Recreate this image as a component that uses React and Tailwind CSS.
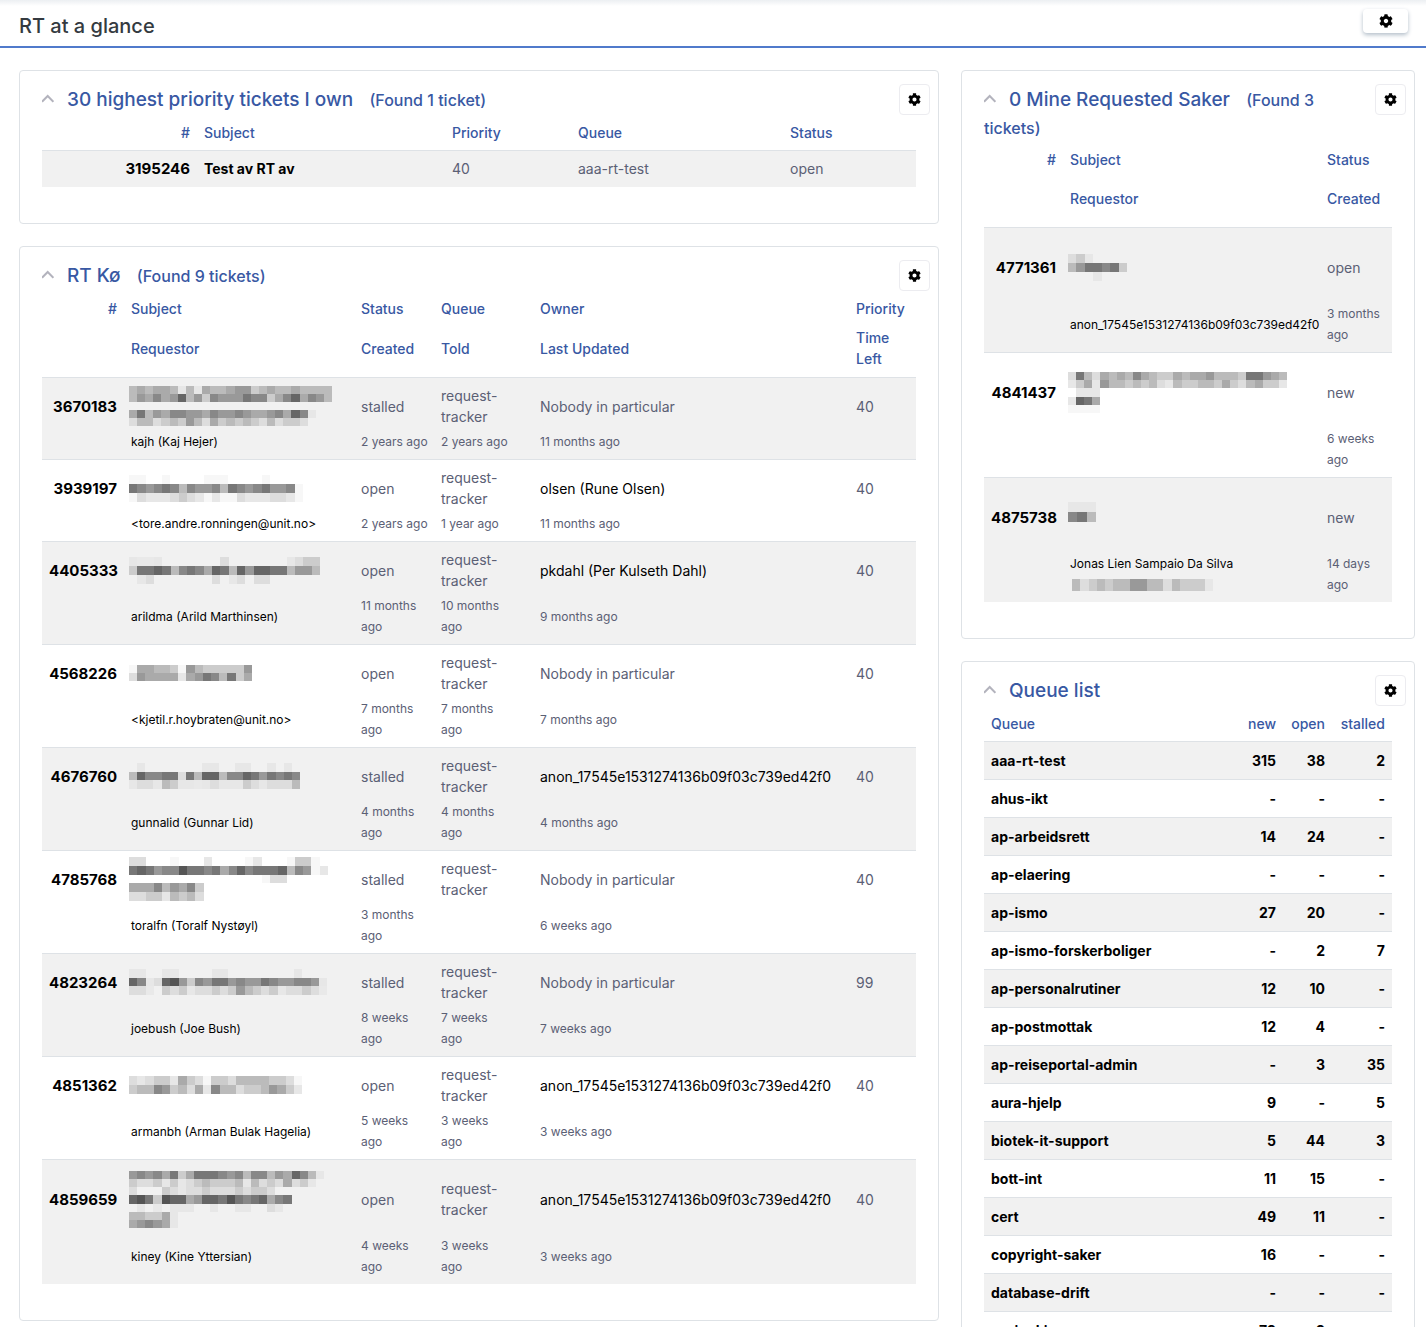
import React from "react";
import { FaCog } from "react-icons/fa";

const ownTickets = [
    { id: "3195246", subject: "Test av RT av", priority: "40", queue: "aaa-rt-test", status: "open" },
];

// Subjects are hidden: one hex digit per cell, "." leaves the background
const queueTickets = [
    {
        id: "3670183",
        mosaic: {
            width: 203,
            height: 40,
            rows: ["babaabebeabba99cbabbabbbb", "b9a8a96b9c8999788ca86a89b", "", "a7b9a8899a89989aa98a68e", "dbbdcbc9bdacbcbcdbdccd"],
        },
        requestor: "kajh (Kaj Hejer)", status: "stalled", created: "2 years ago", told: "2 years ago",
        owner: "Nobody in particular", updated: "11 months ago", priority: "40",
    },
    {
        id: "3939197",
        mosaic: {
            width: 174,
            height: 27,
            rows: ["ff..f....fff....f....", "789878b8998b78987998f", "fdeeedcdefeffdeeeddef"],
        },
        requestor: "<tore.andre.ronningen@unit.no>", status: "open", created: "2 years ago", told: "1 year ago",
        owner: "olsen (Rune Olsen)", updated: "11 months ago", priority: "40",
    },
    {
        id: "4405333",
        mosaic: {
            width: 191,
            height: 27,
            rows: ["effe.......d.......edcc", "c7767b878a67b696677b99b", ".ed.......d.ed.dd......"],
        },
        requestor: "arildma (Arild Marthinsen)", status: "open", created: "11 months ago", told: "10 months ago",
        owner: "pkdahl (Per Kulseth Dahl)", updated: "9 months ago", priority: "40",
    },
    {
        id: "4568226",
        mosaic: { width: 123, height: 16, rows: ["faabbcf9bccccc9", "d9aaaaea978b7ca"] },
        requestor: "<kjetil.r.hoybraten@unit.no>", status: "open", created: "7 months ago", told: "7 months ago",
        owner: "Nobody in particular", updated: "7 months ago", priority: "40",
    },
    {
        id: "4676760",
        mosaic: {
            width: 171,
            height: 26,
            rows: [".e.......ee..ee..e.e.", "b68877d7b66b886797878", "eddebceefedeeecdedddb"],
        },
        requestor: "gunnalid (Gunnar Lid)", status: "stalled", created: "4 months ago", told: "4 months ago",
        owner: "anon_17545e1531274136b09f03c739ed42f0", updated: "4 months ago", priority: "40",
    },
    {
        id: "4785768",
        mosaic: {
            width: 199,
            height: 44,
            rows: ["dd...f...e....fe...fccf.", "76798857787a8687776b89fe", "................fdd.....", "aaa8b9a8c", "ddccebcbd"],
        },
        requestor: "toralfn (Toralf Nystøyl)", status: "stalled", created: "3 months ago", told: "",
        owner: "Nobody in particular", updated: "6 weeks ago", priority: "40",
    },
    {
        id: "4823264",
        mosaic: {
            width: 198,
            height: 26,
            rows: ["ee..ee....ee........e...", "68ed659c897798997899889e", "ddf.cdceddcdc9bcdceddcdf"],
        },
        requestor: "joebush (Joe Bush)", status: "stalled", created: "8 weeks ago", told: "7 weeks ago",
        owner: "Nobody in particular", updated: "7 weeks ago", priority: "99",
    },
    {
        id: "4851362",
        mosaic: { width: 173, height: 18, rows: ["dedcceacdfccdbbbbccdf", "cbb89cbdae8bbdccb9ace"] },
        requestor: "armanbh (Arman Bulak Hagelia)", status: "open", created: "5 weeks ago", told: "3 weeks ago",
        owner: "anon_17545e1531274136b09f03c739ed42f0", updated: "3 weeks ago", priority: "40",
    },
    {
        id: "4859659",
        tall: true,
        mosaic: {
            width: 195,
            height: 57,
            rows: [
                "9898a7ca777898b88b9a68be",
                "cddcecedcbcccbebdcdadce.",
                "d...cdeddcdddcdccd",
                "657c566a966757876a87",
                ".e.f.eee..e..ee..de.",
                "bbccae",
                "a989ae",
            ],
        },
        requestor: "kiney (Kine Yttersian)", status: "open", created: "4 weeks ago", told: "3 weeks ago",
        owner: "anon_17545e1531274136b09f03c739ed42f0", updated: "3 weeks ago", priority: "40",
    },
];

const requestedTickets = [
    {
        id: "4771361",
        mosaic: { width: 59, height: 27, rows: ["dce....", "b97787c", "...e..."] },
        requestor: "anon_17545e1531274136b09f03c739ed42f0", status: "open", created: "3 months ago",
    },
    {
        id: "4841437",
        mosaic: {
            width: 219,
            height: 41,
            rows: ["d7bdabab8abccabaa9bbbc779ab", "ecae9bbcbcbdebccbbcacdbacce", ".eee", "e67a", "ffff"],
        },
        requestor: "", status: "new", created: "6 weeks ago",
    },
    {
        id: "4875738",
        mosaic: { width: 28, height: 30, rows: ["eee", "87b", "..."] },
        requestor: "Jonas Lien Sampaio Da Silva",
        hidden: { width: 141, height: 12, rows: ["bdcbcbb99bbdbccce"] },
        status: "new", created: "14 days ago",
    },
];

const queues = [
    ["aaa-rt-test", "315", "38", "2"],
    ["ahus-ikt", "-", "-", "-"],
    ["ap-arbeidsrett", "14", "24", "-"],
    ["ap-elaering", "-", "-", "-"],
    ["ap-ismo", "27", "20", "-"],
    ["ap-ismo-forskerboliger", "-", "2", "7"],
    ["ap-personalrutiner", "12", "10", "-"],
    ["ap-postmottak", "12", "4", "-"],
    ["ap-reiseportal-admin", "-", "3", "35"],
    ["aura-hjelp", "9", "-", "5"],
    ["biotek-it-support", "5", "44", "3"],
    ["bott-int", "11", "15", "-"],
    ["cert", "49", "11", "-"],
    ["copyright-saker", "16", "-", "-"],
    ["database-drift", "-", "-", "-"],
    ["eo-innkjop", "79", "9", "-"],
];

const tableClass = "w-full table-fixed border-separate border-spacing-0 text-left leading-[21px]";
const headClass = "px-[7px] py-[7px] font-medium";
const subHeadClass = "px-[7px] pt-px pb-2 font-medium";
const rowCellClass = "border-t border-[#dee2e6] px-[7px] pb-px";
const cellClass = "border-t border-[#dee2e6] px-[7px] pt-[7px] pb-[2px]";
const subCellClass = "pl-[7px] pt-[2px] pb-[7px] text-[12px]";
const idClass = "text-right text-[15px] font-bold text-black";

function Mosaic({ width, height, rows }) {
    const cols = Math.max(...rows.map((row) => row.length));
    return (
        <svg
            className="-my-0.5 -ml-0.5 block"
            width={width}
            height={height}
            viewBox={`0 0 ${cols} ${rows.length}`}
            preserveAspectRatio="none"
            shapeRendering="crispEdges"
            aria-hidden="true"
        >
            {rows.map((row, y) =>
                row.split("").map((shade, x) =>
                    shade === "." ? null : (
                        <rect
                            key={`${x}-${y}`}
                            x={x}
                            y={y}
                            width="1"
                            height="1"
                            fill={shade === "f" ? "#00000008" : shade === "e" ? "#e7e7e7" : `#${shade.repeat(3)}`}
                        />
                    )
                )
            )}
        </svg>
    );
}

function Card({ title, found, children }) {
    return (
        <section className="rounded border border-[#dee2e6] pb-9">
            <div className="flex items-start gap-2 pt-[13px] pr-2 pl-[22px]">
                <h2 className="mt-[2px] flex-1 text-[19px] leading-7 font-medium text-[#3858a3]">
                    <button type="button" aria-label={`Toggle ${title}`} className="mr-[13px] inline-block">
                        <svg width="12" height="12" viewBox="0 0 12 12" fill="none" stroke="#b3b3bd" strokeWidth="2" className="block">
                            <path d="M0 7.8L5.7 2L11.4 7.8" />
                        </svg>
                    </button>
                    <a href="#">{title}</a>
                    {found && <span className="ml-3 text-[16px] leading-5"> ({found})</span>}
                </h2>
                <button
                    type="button"
                    aria-label={`Edit ${title}`}
                    className="flex size-[31px] items-center justify-center rounded border border-[#ececf0] bg-white text-black"
                >
                    <FaCog size={13} />
                </button>
            </div>
            <div className="px-[22px]">{children}</div>
        </section>
    );
}

function OwnTickets() {
    return (
        <Card title="30 highest priority tickets I own" found="Found 1 ticket">
            <table className={tableClass}>
                <colgroup>
                    <col className="w-[155px]" />
                    <col />
                    <col className="w-[126px]" />
                    <col className="w-[212px]" />
                    <col className="w-[133px]" />
                </colgroup>
                <thead className="text-[#3858a3]">
                    <tr>
                        <th className={`${headClass} text-right`}>#</th>
                        <th className={headClass}>Subject</th>
                        <th className={headClass}>Priority</th>
                        <th className={headClass}>Queue</th>
                        <th className={headClass}>Status</th>
                    </tr>
                </thead>
                <tbody>
                    {ownTickets.map((ticket) => (
                        <tr key={ticket.id} className="h-[37px] bg-[#f1f1f1]">
                            <td className={`${rowCellClass} ${idClass}`}><a href="#">{ticket.id}</a></td>
                            <td className={`${rowCellClass} font-bold text-black`}><a href="#">{ticket.subject}</a></td>
                            <td className={rowCellClass}>{ticket.priority}</td>
                            <td className={rowCellClass}>{ticket.queue}</td>
                            <td className={rowCellClass}>{ticket.status}</td>
                        </tr>
                    ))}
                </tbody>
            </table>
        </Card>
    );
}

function QueueTickets() {
    return (
        <Card title="RT Kø" found="Found 9 tickets">
            <table className={tableClass}>
                <colgroup>
                    <col className="w-[82px]" />
                    <col />
                    <col className="w-[80px]" />
                    <col className="w-[99px]" />
                    <col className="w-[316px]" />
                    <col className="w-[67px]" />
                </colgroup>
                <thead className="text-[#3858a3]">
                    <tr>
                        <th className={`${headClass} text-right`}>#</th>
                        <th className={headClass}>Subject</th>
                        <th className={headClass}>Status</th>
                        <th className={headClass}>Queue</th>
                        <th className={headClass}>Owner</th>
                        <th className={headClass}>Priority</th>
                    </tr>
                    <tr>
                        <th></th>
                        <th className={subHeadClass}>Requestor</th>
                        <th className={subHeadClass}>Created</th>
                        <th className={subHeadClass}>Told</th>
                        <th className={subHeadClass}>Last Updated</th>
                        <th className={subHeadClass}>Time<br />Left</th>
                    </tr>
                </thead>
                {queueTickets.map((ticket) => (
                    <tbody key={ticket.id} className="odd:bg-[#f1f1f1]">
                        <tr className={ticket.tall ? "h-[74px]" : ""}>
                            <td className={`${cellClass} ${idClass}`}><a href="#">{ticket.id}</a></td>
                            <td className={cellClass}><Mosaic {...ticket.mosaic} /></td>
                            <td className={cellClass}>{ticket.status}</td>
                            <td className={cellClass}>request-<br />tracker</td>
                            <td className={cellClass}>
                                {ticket.owner === "Nobody in particular" ? ticket.owner : <a href="#" className="text-black">{ticket.owner}</a>}
                            </td>
                            <td className={cellClass}>{ticket.priority}</td>
                        </tr>
                        <tr>
                            <td></td>
                            <td className={`${subCellClass} text-black`}><a href="#">{ticket.requestor}</a></td>
                            <td className={`${subCellClass} pr-1`}>{ticket.created}</td>
                            <td className={`${subCellClass} pr-6`}>{ticket.told}</td>
                            <td className={subCellClass}>{ticket.updated}</td>
                            <td></td>
                        </tr>
                    </tbody>
                ))}
            </table>
        </Card>
    );
}

function RequestedTickets() {
    return (
        <Card title="0 Mine Requested Saker" found="Found 3 tickets">
            <table className={tableClass}>
                <colgroup>
                    <col className="w-[79px]" />
                    <col />
                    <col className="w-[72px]" />
                </colgroup>
                <thead className="text-[#3858a3]">
                    <tr>
                        <th className={`${headClass} text-right`}>#</th>
                        <th className={headClass}>Subject</th>
                        <th className={headClass}>Status</th>
                    </tr>
                    <tr className="h-[50px]">
                        <th></th>
                        <th className={subHeadClass}>Requestor</th>
                        <th className={subHeadClass}>Created</th>
                    </tr>
                </thead>
                {requestedTickets.map((ticket) => (
                    <tbody key={ticket.id} className="odd:bg-[#f1f1f1]">
                        <tr className="h-[74px]">
                            <td className={`${cellClass} ${idClass}`}><a href="#">{ticket.id}</a></td>
                            <td className={cellClass}><Mosaic {...ticket.mosaic} /></td>
                            <td className={cellClass}>{ticket.status}</td>
                        </tr>
                        <tr className="h-[51px]">
                            <td></td>
                            <td className={`${subCellClass} text-black`}>
                                <a href="#">{ticket.requestor}</a>
                                {ticket.hidden && <div className="flex h-[21px] items-center pl-1"><Mosaic {...ticket.hidden} /></div>}
                            </td>
                            <td className={`${subCellClass} pr-2`}>{ticket.created}</td>
                        </tr>
                    </tbody>
                ))}
            </table>
        </Card>
    );
}

function QueueList() {
    return (
        <Card title="Queue list">
            <table className={tableClass}>
                <colgroup>
                    <col />
                    <col className="w-[60px]" />
                    <col className="w-[49px]" />
                    <col className="w-[60px]" />
                </colgroup>
                <thead className="text-[#3858a3]">
                    <tr>
                        <th className={headClass}>Queue</th>
                        <th className={`${headClass} text-right`}>new</th>
                        <th className={`${headClass} text-right`}>open</th>
                        <th className={`${headClass} text-right`}>stalled</th>
                    </tr>
                </thead>
                <tbody className="font-bold text-black">
                    {queues.map(([name, ...counts]) => (
                        <tr key={name} className="h-[38px] odd:bg-[#f1f1f1]">
                            <td className={rowCellClass}><a href="#">{name}</a></td>
                            {counts.map((count, i) => (
                                <td key={i} className={`${rowCellClass} text-right`}><a href="#">{count}</a></td>
                            ))}
                        </tr>
                    ))}
                </tbody>
            </table>
        </Card>
    );
}

export default function App() {
    return (
        <div className="h-screen overflow-hidden bg-white font-['Inter','Liberation_Sans',sans-serif] text-[14px] text-[#5b6075]">
            <header className="flex h-12 items-start justify-between border-b-2 border-[#507acb] bg-linear-to-b from-[#eceff2] to-white to-[6px] pr-[18px] pl-[19px]">
                <h1 className="pt-3 text-[20px] leading-7 font-medium text-[#343a40]">RT at a glance</h1>
                <button
                    type="button"
                    aria-label="Page settings"
                    className="mt-[9px] flex h-6 w-[45px] items-center justify-center rounded bg-white text-black shadow-[0_2px_4px_#b4bfca]"
                >
                    <FaCog size={14} />
                </button>
            </header>
            <main className="grid grid-cols-[920fr_454fr] items-start gap-[22px] pt-[22px] pr-[11px] pl-[19px]">
                <div className="flex flex-col gap-[22px]">
                    <OwnTickets />
                    <QueueTickets />
                </div>
                <div className="flex flex-col gap-[22px]">
                    <RequestedTickets />
                    <QueueList />
                </div>
            </main>
        </div>
    );
}
